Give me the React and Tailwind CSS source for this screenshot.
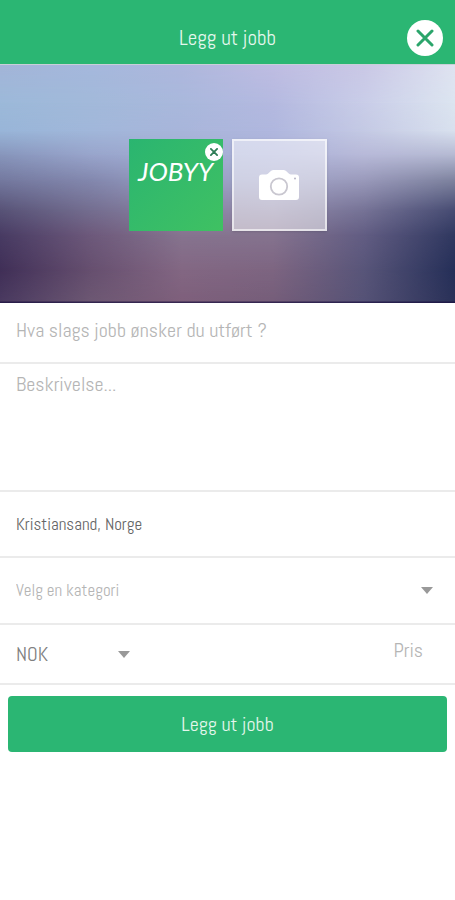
import React from "react";

const FONT = "font-['Abel','Liberation_Sans_Narrow','Roboto',sans-serif]";

/* Colour mesh of the blurred backdrop: each row is blended into the next one. */
const MESH = [
  { y: 0, colors: ["#a3b5d8", "#a5b8dc", "#aeb7dd", "#bfbde2", "#cac8e6", "#dfe3f1"] },
  { y: 38, colors: ["#9cb9d9", "#a2b9da", "#a9b8dc", "#b4b9e0", "#c9cde8", "#dce5f0"] },
  { y: 66, colors: ["#98b5d8", "#a1b7da", "#a8b5da", "#b0b7de", "#c4c9e4", "#d8e0ee"] },
  { y: 90, colors: ["#8795bb", "#98a4cb", "#a2add3", "#abb0d8", "#b7b9d8", "#b4b9d2"] },
  { y: 115, colors: ["#74799f", "#8388ae", "#999fc5", "#a1a3c8", "#9a9abb", "#7e839f"] },
  { y: 145, colors: ["#585377", "#746e90", "#8c83a4", "#9189aa", "#767396", "#474c73"] },
  { y: 170, colors: ["#483b63", "#6d597b", "#86748f", "#85738f", "#625d83", "#303860"] },
  { y: 205, colors: ["#402f57", "#664f6f", "#836783", "#7d6581", "#585579", "#252f58"] },
  { y: 238, colors: ["#4a3a60", "#6d5873", "#7e5f7b", "#755d79", "#555276", "#2a3158"] },
];

function Backdrop() {
  return (
    <svg
      className="absolute inset-0 h-full w-full"
      viewBox="0 0 455 238"
      preserveAspectRatio="none"
      aria-hidden="true"
    >
      <defs>
        {MESH.map((row, i) => (
          <linearGradient key={`h${i}`} id={`hue${i}`} x1="0" x2="1" y1="0" y2="0">
            {row.colors.map((c, j) => (
              <stop key={j} offset={j / 5} stopColor={c} />
            ))}
          </linearGradient>
        ))}
        {MESH.slice(1).map((row, i) => (
          <React.Fragment key={`m${i}`}>
            <linearGradient
              id={`fade${i + 1}`}
              gradientUnits="userSpaceOnUse"
              x1="0"
              x2="0"
              y1={MESH[i].y}
              y2={row.y}
            >
              <stop offset="0" stopColor="#fff" stopOpacity="0" />
              <stop offset="1" stopColor="#fff" stopOpacity="1" />
            </linearGradient>
            <mask id={`mask${i + 1}`} maskUnits="userSpaceOnUse" x="0" y="0" width="455" height="238">
              <rect width="455" height="238" fill={`url(#fade${i + 1})`} />
            </mask>
          </React.Fragment>
        ))}
      </defs>
      {MESH.map((row, i) => (
        <rect
          key={i}
          width="455"
          height="238"
          fill={`url(#hue${i})`}
          mask={i ? `url(#mask${i})` : undefined}
        />
      ))}
      <rect y="236.500" width="455" height="1.500" fill="#1a0f40" opacity="0.7" />
    </svg>
  );
}

function Cross({ className, strokeWidth }) {
  return (
    <svg className={className} viewBox="0 0 18 18" fill="none" stroke="currentColor" strokeWidth={strokeWidth} strokeLinecap="round" aria-hidden="true">
      <path d="M2 2 16 16M16 2 2 16" />
    </svg>
  );
}

function Camera() {
  return (
    <svg className="h-8 w-[42px]" viewBox="0 0 42 32" aria-hidden="true">
      <path
        fill="#fff"
        d="M4 5.500H8C11 5.500 12 1 15.500 1H25.500C29 1 30 5.500 33 5.500H38A3 3 0 0 1 41 8.500V28A3 3 0 0 1 38 31H4A3 3 0 0 1 1 28V8.500A3 3 0 0 1 4 5.500Z"
      />
      <circle cx="21" cy="17.500" r="8.200" fill="none" stroke="#c9c7d0" strokeWidth="1.800" />
      <circle cx="37" cy="9.500" r="1" fill="#b5b3c4" />
    </svg>
  );
}

function Caret() {
  return (
    <svg className="pointer-events-none h-[7px] w-3 shrink-0 text-[#999]" viewBox="0 0 12 7" fill="currentColor" aria-hidden="true">
      <path d="M0 0H12L6 7Z" />
    </svg>
  );
}

export default function App() {
  return (
    <main className={`min-h-screen bg-white ${FONT}`}>
      <header className="grid h-16 grid-cols-[1fr_auto_1fr] items-center bg-[#2bb673] px-3 pt-3">
        <h1 className="col-start-2 text-[21px] leading-7 text-[#e4f7ed]">Legg ut jobb</h1>
        <button type="button" aria-label="Lukk" className="flex size-9 items-center justify-center justify-self-end rounded-full bg-white text-[#2ba56b]">
          <Cross className="size-[18px]" strokeWidth="3" />
        </button>
      </header>

      <section className="relative flex h-[239px] justify-center gap-[9px] border-t border-[#c9cfd8] pt-[74px]">
        <Backdrop />
        <div className="relative flex h-[92px] w-[94px] justify-center bg-linear-to-br from-[#2ab570] to-[#3fc162] pt-4">
          <span className="text-[26px] leading-8 font-normal text-white italic font-['Lato',sans-serif]">JOBYY</span>
          <button type="button" aria-label="Fjern bilde" className="absolute top-1 right-0 flex size-[18px] items-center justify-center rounded-full bg-white text-[#2f7d57]">
            <Cross className="size-2" strokeWidth="4" />
          </button>
        </div>
        <button type="button" aria-label="Legg til bilde" className="relative flex h-[92px] w-[95px] items-center justify-center border-2 border-white/60 bg-white/50 shadow-sm">
          <Camera />
        </button>
      </section>

      <form onSubmit={(e) => e.preventDefault()}>
        <input
          type="text"
          aria-label="Hva slags jobb ønsker du utført ?"
          placeholder="Hva slags jobb ønsker du utført ?"
          className="block h-[61px] w-full border-b-2 border-[#ebebeb] px-4 pb-1.5 text-xl text-[#555] outline-none placeholder:text-[#b5b5b5]"
        />
        <textarea
          aria-label="Beskrivelse"
          placeholder="Beskrivelse..."
          className="block h-32 w-full resize-none border-b-2 border-[#ebebeb] px-4 pt-1.5 text-xl text-[#555] outline-none placeholder:text-[#b5b5b5]"
        />
        <input
          type="text"
          aria-label="Sted"
          defaultValue="Kristiansand, Norge"
          className="block h-[66px] w-full border-b-2 border-[#ebebeb] px-4 text-[17px] text-[#666] outline-none"
        />
        <div className="flex h-[67px] items-center border-b-2 border-[#ebebeb] pr-[22px]">
          <select aria-label="Kategori" className="h-full min-w-0 flex-1 appearance-none px-4 text-[17px] text-[#b5b5b5] outline-none">
            <option>Velg en kategori</option>
          </select>
          <Caret />
        </div>
        <div className="flex h-[60px] items-center justify-between border-b-2 border-[#ebebeb] pr-8">
          <div className="flex h-full items-center">
            <select aria-label="Valuta" className="h-full w-[118px] appearance-none px-4 text-xl text-[#808080] outline-none">
              <option>NOK</option>
            </select>
            <Caret />
          </div>
          <input
            type="text"
            aria-label="Pris"
            placeholder="Pris"
            className="h-full w-32 pb-2 text-right text-xl text-[#555] outline-none placeholder:text-[#b5b5b5]"
          />
        </div>
        <div className="px-2 pt-[11px]">
          <button type="submit" className="h-14 w-full rounded-sm bg-[#2bb673] text-xl text-[#e4f7ed]">
            Legg ut jobb
          </button>
        </div>
      </form>
    </main>
  );
}
